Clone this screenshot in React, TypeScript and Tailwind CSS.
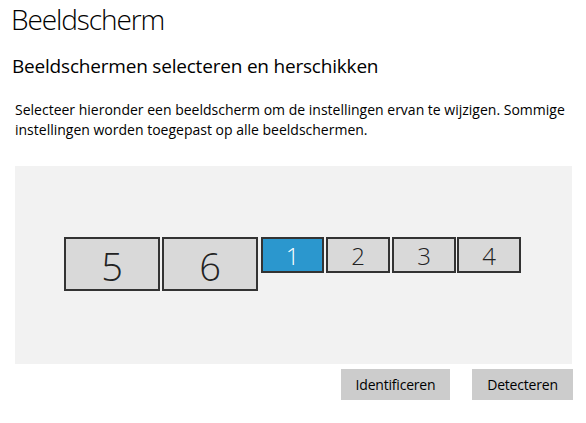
const monitors = [
  { id: "5", left: 49, top: 71, w: 96, h: 54, big: true },
  { id: "6", left: 147, top: 71, w: 96, h: 54, big: true },
  { id: "1", left: 246, top: 71, w: 63, h: 36, active: true },
  { id: "2", left: 311, top: 71, w: 64, h: 36 },
  { id: "3", left: 377, top: 71, w: 64, h: 36 },
  { id: "4", left: 442, top: 71, w: 64, h: 36 },
];

export default function App() {
  return (
    <div
      className="w-[586px] h-[423px] bg-white text-black overflow-hidden"
      style={{ fontFamily: '"Open Sans", "Noto Sans", sans-serif' }}
    >
      <h1 className="pl-[11px] pt-[1px] text-[28px] leading-[36px] font-light tracking-[-1.1px]">
        Beeldscherm
      </h1>
      <h2 className="pl-[12px] mt-[16px] text-[19px] leading-[26px] tracking-[-0.2px]">
        Beeldschermen selecteren en herschikken
      </h2>
      <p className="pl-[15px] pr-[5px] mt-[21px] text-[14px] leading-[20px]">
        Selecteer hieronder een beeldscherm om de instellingen ervan te wijzigen. Sommige
        instellingen worden toegepast op alle beeldschermen.
      </p>

      <div className="relative ml-[15px] mt-[26px] w-[557px] h-[198px] bg-[#f2f2f2]">
        {monitors.map((m) => (
          <div
            key={m.id}
            className={`absolute flex items-center justify-center border-2 border-[#333333] font-light ${
              m.active ? "bg-[#2b97ce] text-white" : "bg-[#d9d9d9] text-[#222]"
            } ${m.big ? "text-[38px] pt-[4px]" : "text-[24px] pt-[2px]"}`}
            style={{ left: m.left, top: m.top, width: m.w, height: m.h }}
          >
            {m.id}
          </div>
        ))}
      </div>

      <div className="flex justify-end gap-[22px] w-[573px] mt-[5px]">
        <button className="w-[109px] h-[31px] bg-[#cccccc] text-[14px] tracking-[-0.2px]">
          Identificeren
        </button>
        <button className="w-[101px] h-[31px] bg-[#cccccc] text-[14px] tracking-[-0.2px]">
          Detecteren
        </button>
      </div>
    </div>
  );
}
